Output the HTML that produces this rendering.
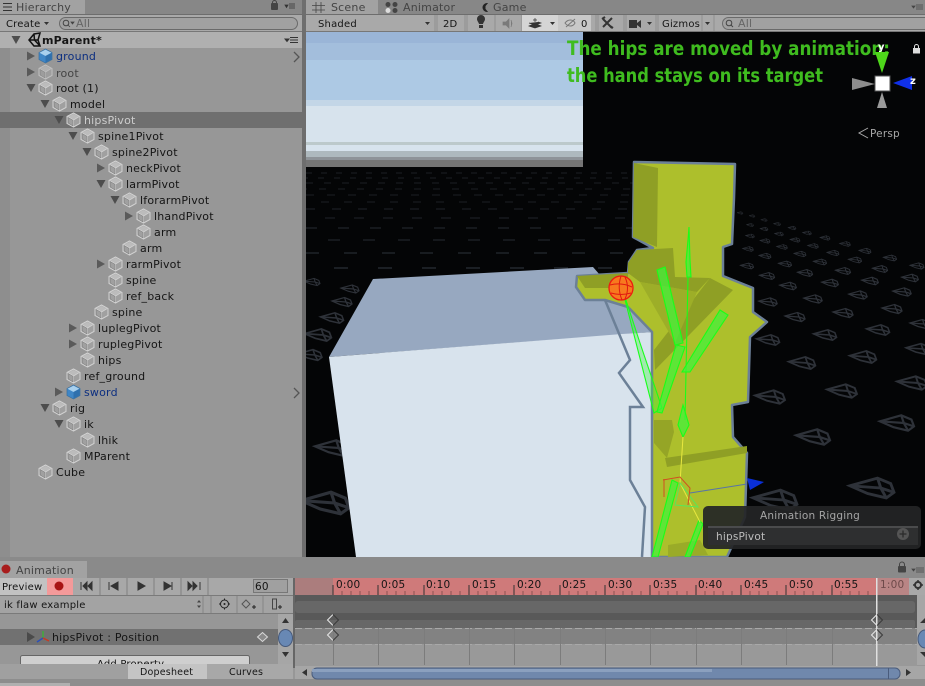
<!DOCTYPE html>
<html><head><meta charset="utf-8"><title>Unity Editor</title>
<style>
html,body{margin:0;padding:0;width:925px;height:686px;overflow:hidden;background:#979797}
svg{display:block;position:absolute;left:0;top:0}
text{font-family:"DejaVu Sans","Liberation Sans",sans-serif;font-size:11px;fill:#151515;letter-spacing:.2px}
.s{font-size:10px}
.big{font-family:"DejaVu Sans","Liberation Sans",sans-serif;font-weight:bold;font-size:19.500px;fill:#3fbc1f;letter-spacing:0}
</style></head><body>
<svg width="925" height="686" viewBox="0 0 925 686" xmlns="http://www.w3.org/2000/svg">
<defs>
<clipPath id="sc"><rect x="306" y="32" width="619" height="526"/></clipPath>
<g id="c"><path d="M0 3.500 6.500 0 13 3.500V10.500L6.500 14 0 10.500Z" fill="#a0a0a0" stroke="#d2d2d2" stroke-width="1"/><path d="M1 3.700 6.500 6.800 12 3.700 6.500 1Z" fill="#bcbcbc"/><path d="M6.500 7V13.500M1 3.700 6.500 7 12 3.700" stroke="#d2d2d2" stroke-width=".8" fill="none"/><path d="M1.200 10 1 4.500 6 7.300V13Z" fill="none" stroke="#777" stroke-width=".5"/></g>
<g id="cb"><path d="M0 3.500 6.500 0 13 3.500V10.500L6.500 14 0 10.500Z" fill="#3f86c6" stroke="#3a6f9e" stroke-width=".7"/><path d="M0.500 3.700 6.500 7 12.500 3.700 6.500 0.600Z" fill="#a8d0ee"/><path d="M6.500 7 12.600 3.700V10.300L6.500 13.600Z" fill="#2f70ad"/></g>
<path id="ad" d="M0 -4.500 8 0 0 4.500Z" transform="rotate(90)" fill="#4d4d4d"/>
<path id="ar" d="M0 -4.500 8 0 0 4.500Z" fill="#5a5a5a"/>
<g id="L" fill="none" stroke="#2e3239" stroke-width="2.600"><path d="M-20 -2 5 -9 17 -4 20 4 13 9-4 5Z"/><path d="M-20 -2 8 0M5 -9 8 0 13 9 M8 0 20 4"/></g>
<g id="D"><path d="M0-5.500-5.500 0 0 5.500" fill="none" stroke="#e8e8e8" stroke-width="1"/><path d="M0-5.500 5.500 0 0 5.500" fill="none" stroke="#3a3a3a" stroke-width="1"/></g>
</defs>

<!-- hierarchy panel -->
<rect width="306" height="558" fill="#979797"/>
<rect x="0" y="0" width="306" height="15" fill="#878787"/>
<rect x="0" y="0" width="85" height="15" fill="#a2a2a2"/>
<path d="M3 3.500h9M3 7h9M3 10.500h9" stroke="#333" stroke-width="1"/>
<text x="16" y="11" style="fill:#444">Hierarchy</text>
<rect x="271" y="3" width="7" height="7" rx="1" fill="#444"/><path d="M272.500 4V2.500a2 2 0 0 1 4 0V4" fill="none" stroke="#444"/>
<path d="M285 5h3l-1.500 2.500Z M289 4h6M289 6h6M289 8h6" stroke="#333" stroke-width=".8" fill="#333"/>
<rect x="0" y="15" width="303" height="17" fill="#a9a9a9"/>
<rect x="0" y="14" width="303" height="1" fill="#6d6d6d"/><rect x="0" y="31" width="303" height="1" fill="#777"/>
<text x="6" y="27" class="s">Create</text><path d="M44 22h5l-2.500 3Z" fill="#333"/>
<rect x="59.500" y="17.500" width="238" height="12" rx="6" fill="#a1a1a1" stroke="#6a6a6a"/>
<circle cx="66" cy="23" r="2.800" fill="none" stroke="#444"/><path d="M68 25l2 2M71 22h3l-1.500 2Z" stroke="#444" fill="#444" stroke-width=".8"/>
<text x="76" y="27" style="fill:#666">All</text>
<rect x="0" y="32" width="303" height="16" fill="#b0b0b0"/>
<rect x="0" y="48" width="10" height="510" fill="#8e8e8e"/>
<rect x="302" y="0" width="4" height="558" fill="#6e6e6e"/>
<use href="#ad" x="16" y="36"/>
<path d="M29 40 34 34 40 33 38 40 40 46 34 46Z M34 34 34.500 40 M29 40H38 M34.500 40 40 46" fill="none" stroke="#111" stroke-width="1.500"/>
<text x="42" y="44" style="font-weight:bold;font-size:11px">mParent*</text>
<path d="M285 39h4l-2 2.500Z M290 37.500h8M290 40h8M290 42.500h8" stroke="#333" stroke-width="1" fill="#333"/>

<rect x="0" y="112" width="302" height="16" fill="#6f6f6f"/>

<!-- tree rows -->
<use href="#ar" x="27" y="56"/><use href="#cb" x="39" y="49"/><text x="56" y="60" style="fill:#0d2f80">ground</text>
<path d="M294 52 299 57 294 62" fill="none" stroke="#555" stroke-width="1.300"/>
<use href="#ar" x="27" y="72"/><use href="#c" x="39" y="65" opacity=".7"/><text x="56" y="77" style="fill:#444">root</text>
<use href="#ad" x="31" y="84"/><use href="#c" x="39" y="81"/><text x="56" y="92">root (1)</text>
<use href="#ad" x="45" y="100"/><use href="#c" x="53" y="97"/><text x="70" y="108">model</text>
<use href="#ad" x="59" y="116"/><use href="#c" x="67" y="113"/><text x="84" y="124" style="fill:#cdcdcd">hipsPivot</text>
<use href="#ad" x="73" y="132"/><use href="#c" x="81" y="129"/><text x="98" y="140">spine1Pivot</text>
<use href="#ad" x="87" y="148"/><use href="#c" x="95" y="145"/><text x="112" y="156">spine2Pivot</text>
<use href="#ar" x="97" y="168"/><use href="#c" x="109" y="161"/><text x="126" y="172">neckPivot</text>
<use href="#ad" x="101" y="180"/><use href="#c" x="109" y="177"/><text x="126" y="188">larmPivot</text>
<use href="#ad" x="115" y="196"/><use href="#c" x="123" y="193"/><text x="140" y="204">lforarmPivot</text>
<use href="#ar" x="125" y="216"/><use href="#c" x="137" y="209"/><text x="154" y="220">lhandPivot</text>
<use href="#c" x="137" y="225"/><text x="154" y="236">arm</text>
<use href="#c" x="123" y="241"/><text x="140" y="252">arm</text>
<use href="#ar" x="97" y="264"/><use href="#c" x="109" y="257"/><text x="126" y="268">rarmPivot</text>
<use href="#c" x="109" y="273"/><text x="126" y="284">spine</text>
<use href="#c" x="109" y="289"/><text x="126" y="300">ref_back</text>
<use href="#c" x="95" y="305"/><text x="112" y="316">spine</text>
<use href="#ar" x="69" y="328"/><use href="#c" x="81" y="321"/><text x="98" y="332">luplegPivot</text>
<use href="#ar" x="69" y="344"/><use href="#c" x="81" y="337"/><text x="98" y="348">ruplegPivot</text>
<use href="#c" x="81" y="353"/><text x="98" y="364">hips</text>
<use href="#c" x="67" y="369"/><text x="84" y="380">ref_ground</text>
<use href="#ar" x="55" y="392"/><use href="#cb" x="67" y="385"/><text x="84" y="396" style="fill:#0d2f80">sword</text>
<path d="M294 388 299 393 294 398" fill="none" stroke="#555" stroke-width="1.300"/>
<use href="#ad" x="45" y="404"/><use href="#c" x="53" y="401"/><text x="70" y="412">rig</text>
<use href="#ad" x="59" y="420"/><use href="#c" x="67" y="417"/><text x="84" y="428">ik</text>
<use href="#c" x="81" y="433"/><text x="98" y="444">lhik</text>
<use href="#c" x="67" y="449"/><text x="84" y="460">MParent</text>
<use href="#c" x="39" y="465"/><text x="56" y="476">Cube</text>

<!-- scene tabs and toolbar -->
<rect x="306" y="0" width="619" height="15" fill="#878787"/>
<rect x="306" y="0" width="72" height="15" fill="#a2a2a2"/>
<path d="M316 2v11M321 2v11M312 5.500h13M312 10h13" stroke="#444" stroke-width=".8"/>
<text x="331" y="11" style="fill:#444">Scene</text>
<circle cx="388" cy="4.500" r="2.500" fill="#444"/><circle cx="395" cy="4.500" r="2.500" fill="#444"/><circle cx="388" cy="10.500" r="2.500" fill="#ddd"/><circle cx="395" cy="10.500" r="2.500" fill="#444"/>
<text x="403" y="11" style="fill:#444">Animator</text>
<path d="M487 3.500a4 4 0 1 0 0 8l-2-2.500v-3Z" fill="#222" stroke="#222"/>
<text x="493" y="11" style="fill:#444">Game</text>
<path d="M912 6h3l-1.500 2Z M916 5h7M916 7h7M916 9h7" stroke="#444" stroke-width=".8" fill="#444"/>
<rect x="306" y="15" width="619" height="17" fill="#a9a9a9"/>
<rect x="306" y="14" width="619" height="1" fill="#6d6d6d"/><rect x="306" y="31" width="619" height="1" fill="#777"/>
<text x="318" y="27" class="s">Shaded</text><path d="M425 22h5l-2.500 3Z" fill="#333"/>
<path d="M435 15v16M437 15v16M465 15v16M467 15v16M495 15v16M522 15v16M596 15v16M598 15v16M624 15v16M626 15v16M656 15v16M658 15v16M702 15v16M714 15v16" stroke="#8f8f8f"/>
<text x="443" y="27" class="s">2D</text>
<path d="M477 18a4 4 0 0 1 8 0c0 2-1.500 3-2 5h-4c-.5-2-2-3-2-5ZM479 24h4v3h-4Z" fill="#333" transform="translate(0 1)"/>
<path d="M503 22h3l3-3v9l-3-3h-3Z M511 20l1 3.500-1 3.500" fill="#7a7a7a" stroke="#7a7a7a" stroke-width=".7"/>
<rect x="522" y="15" width="36" height="16" fill="#d5d5d5"/>
<rect x="558" y="15" width="33" height="16" fill="#c8c8c8"/>
<path d="M529 26l6 2 6-2-6-2.500ZM529 23l6 2 6-2-3-1M535 18v4M533 20h4" fill="#333" stroke="#333" stroke-width=".7"/>
<path d="M550 22h5l-2.500 3Z" fill="#333"/>
<path d="M565 23c3-4 8-4 10 0-2 4-7 4-10 0Z M575 19l-9 8" fill="none" stroke="#777" stroke-width="1"/><text x="581" y="27" class="s">0</text>
<path d="M603 19l9 9M612 18l-9 9M602 19l3-2M610 26l3 2" stroke="#333" stroke-width="2"/>
<rect x="629" y="20" width="8" height="8" fill="#333"/><path d="M637 23l4-3v8l-4-3Z" fill="#333"/>
<path d="M647 22h5l-2.500 3Z" fill="#333"/>
<text x="662" y="27" class="s">Gizmos</text><path d="M705 22h5l-2.500 3Z" fill="#333"/>
<rect x="722.500" y="17.500" width="210" height="12" rx="6" fill="#a1a1a1" stroke="#6a6a6a"/>
<circle cx="729" cy="23" r="2.800" fill="none" stroke="#444"/><path d="M731 25l2 2" stroke="#444"/>
<text x="738" y="27" style="fill:#666">All</text>

<!-- scene -->
<rect x="306" y="32" width="619" height="526" fill="#040506"/>
<rect x="306" y="32" width="277" height="28" fill="#9ab5d7"/>
<rect x="306" y="43" width="277" height="17" fill="#a3bedc"/>
<rect x="306" y="60" width="277" height="40" fill="#adc9e4"/>
<rect x="306" y="100" width="277" height="6" fill="#c3d6e7"/>
<rect x="306" y="106" width="277" height="36" fill="#d7e3ed"/>
<rect x="306" y="142" width="277" height="3" fill="#bcc9cb"/>
<rect x="306" y="145" width="277" height="6" fill="#d7e3ed"/>
<rect x="306" y="151" width="277" height="6" fill="#aeb9be"/>
<rect x="306" y="157" width="277" height="3" fill="#8e9398"/>
<rect x="306" y="160" width="277" height="7" fill="#757575"/>

<!-- floor marks (left) -->
<g stroke="#1b1f24" fill="none">
<path d="M306 173H650" stroke-dasharray="6 9"/>
<path d="M306 178H650" stroke-dasharray="6 10" stroke-dashoffset="4"/>
<path d="M306 183H650" stroke-dasharray="7 11"/>
<path d="M306 189H650" stroke-dasharray="7 12" stroke-dashoffset="6"/>
<path d="M306 195H650" stroke-dasharray="8 13"/>
<path d="M306 202H650" stroke-dasharray="8 15" stroke-dashoffset="8"/>
<path d="M306 209H650" stroke-dasharray="9 17" stroke-width="1.200"/>
<path d="M306 218H650" stroke-dasharray="10 19" stroke-dashoffset="10" stroke-width="1.300"/>
<path d="M306 228H650" stroke-dasharray="11 21" stroke-width="1.400"/>
<path d="M306 240H650" stroke-dasharray="12 23" stroke-dashoffset="13" stroke-width="1.600"/>
<path d="M306 253H650" stroke-dasharray="13 25" stroke-width="1.800"/>
<path d="M306 268H650" stroke-dasharray="14 30" stroke-dashoffset="16" stroke-width="2"/>
</g>
<g clip-path="url(#sc)">
<use href="#L" transform="translate(312 282) scale(.4)"/>
<use href="#L" transform="translate(350 289) scale(.45)"/>
<use href="#L" transform="translate(342 302) scale(.5)"/>
<use href="#L" transform="translate(332 318) scale(.58)"/>
<use href="#L" transform="translate(318 335) scale(.67)"/>
<use href="#L" transform="translate(310 355) scale(.6)"/>
<use href="#L" transform="translate(332 448) scale(.85)"/>
<use href="#L" transform="translate(325 503) scale(1.200)"/>
<!-- floor marks (right) -->
<use href="#L" transform="translate(770 397) scale(.75)"/><use href="#L" transform="translate(842 391) scale(.75)"/><use href="#L" transform="translate(912 383) scale(.75)"/>
<use href="#L" transform="translate(802 363) scale(.67)"/><use href="#L" transform="translate(863 357) scale(.67)"/><use href="#L" transform="translate(918 349) scale(.6)"/>
<use href="#L" transform="translate(768 340) scale(.58)"/><use href="#L" transform="translate(825 335) scale(.58)"/><use href="#L" transform="translate(878 330) scale(.58)"/><use href="#L" transform="translate(920 324) scale(.5)"/>
<use href="#L" transform="translate(795 317) scale(.5)"/><use href="#L" transform="translate(843 313) scale(.5)"/><use href="#L" transform="translate(892 309) scale(.5)"/>
<use href="#L" transform="translate(768 302) scale(.46)"/><use href="#L" transform="translate(813 299) scale(.46)"/><use href="#L" transform="translate(858 295) scale(.46)"/><use href="#L" transform="translate(902 292) scale(.46)"/>
<use href="#L" transform="translate(788 286) scale(.42)"/><use href="#L" transform="translate(830 283) scale(.42)"/><use href="#L" transform="translate(870 281) scale(.42)"/><use href="#L" transform="translate(910 278) scale(.42)"/>
<use href="#L" transform="translate(767 276) scale(.38)"/><use href="#L" transform="translate(805 273) scale(.38)"/><use href="#L" transform="translate(843 271) scale(.38)"/><use href="#L" transform="translate(880 269) scale(.38)"/><use href="#L" transform="translate(917 266) scale(.35)"/>
<use href="#L" transform="translate(747 266) scale(.33)"/><use href="#L" transform="translate(785 264) scale(.33)"/><use href="#L" transform="translate(820 262) scale(.33)"/><use href="#L" transform="translate(855 260) scale(.33)"/><use href="#L" transform="translate(890 258) scale(.33)"/>
<use href="#L" transform="translate(765 256) scale(.3)"/><use href="#L" transform="translate(800 254) scale(.3)"/><use href="#L" transform="translate(833 253) scale(.3)"/><use href="#L" transform="translate(865 251) scale(.3)"/>
<use href="#L" transform="translate(748 249) scale(.27)"/><use href="#L" transform="translate(782 247) scale(.27)"/><use href="#L" transform="translate(813 246) scale(.27)"/><use href="#L" transform="translate(845 244) scale(.27)"/>
<use href="#L" transform="translate(765 241) scale(.25)"/><use href="#L" transform="translate(795 240) scale(.25)"/><use href="#L" transform="translate(825 238) scale(.25)"/>
<use href="#L" transform="translate(750 236) scale(.22)"/><use href="#L" transform="translate(779 234) scale(.22)"/><use href="#L" transform="translate(807 233) scale(.22)"/>
<use href="#L" transform="translate(764 229) scale(.2)"/><use href="#L" transform="translate(792 228) scale(.2)"/>
<use href="#L" transform="translate(750 225) scale(.18)"/><use href="#L" transform="translate(777 224) scale(.18)"/>
<use href="#L" transform="translate(764 220) scale(.16)"/><use href="#L" transform="translate(752 216) scale(.15)"/><use href="#L" transform="translate(740 213) scale(.15)"/>
<use href="#L" transform="translate(813 437) scale(.85)"/><use href="#L" transform="translate(897 423) scale(.85)"/>
<use href="#L" transform="translate(872 488) scale(1.100)"/><use href="#L" transform="translate(775 500) scale(1.100)"/>
</g>

<!-- white cube -->
<path d="M329 357 373 279 593 267 600 275 654 332Z" fill="#97a8c0"/>
<path d="M329 357 622 334 654 332V557H356Z" fill="#d8e3ed"/>

<!-- character -->
<path d="M605 300 630 360 619 373 643 407 630 407V480L645 507 642 557" fill="none" stroke="#6c8097" stroke-width="2.500"/>
<path d="M634 162 735 164 734 198 732 244 723 247V276L753 288V312L767 322 750 337 748 402 732 405 733 437 747 453 745 517 727 557H652V332L628 307 605 300H585L576 287 577 276 628 273 629 262 637 250 653 248 633 237Z" fill="#adbf2c" stroke="#6c8097" stroke-width="2.500" stroke-linejoin="round"/>
<path d="M634 163 658 168 657 247 633 237Z" fill="#8f9f25"/>
<path d="M577 276 628 273 628 288 585 288Z" fill="#8f9f25"/>
<path d="M637 250 673 248 675 277 710 278 697 292 640 282 628 273 628 263Z" fill="#8f9f25"/>
<path d="M710 278 733 290 655 370 654 350Z" fill="#8f9f25"/>
<path d="M640 282 697 292 675 343Z" fill="#9dae28"/>
<path d="M665 458 747 446 747 453 667 467Z" fill="#8f9f25"/>
<path d="M654 420 672 420 674 432 667 458 654 443Z" fill="#95a526"/>
<path d="M668 545 700 540 708 555 668 557Z" fill="#9aab28"/>

<!-- bones -->
<g fill="#3cf53c" fill-opacity=".7" stroke="#18ff18" stroke-width="1.100">
<path d="M622 288 640 343 662 408 654 413Z" fill-opacity=".35"/>
<path d="M657 270 665 267 683 343 675 345Z"/>
<path d="M689 227 690 260 691 277 687 277 686 262 688 240ZM688 277 685 420"/>
<path d="M720 310 728 315 690 372 682 372Z"/>
<path d="M676 345 685 347 662 413 657 412Z"/>
<path d="M683 405 678 425 683 437 689 425Z"/>
<path d="M672 480 678 483 658 557 652 557Z"/>
<path d="M699 520 703 524 690 557 685 557Z"/>
</g>
<path d="M683 437 680 483 700 522" stroke="#e8e840" fill="none"/>
<path d="M680 483 675 505 698 507Z" fill="none" stroke="#58e858"/>
<path d="M663 480 680 477 690 488 688 505" fill="none" stroke="#d05020"/>
<path d="M664 479V497" stroke="#d05020"/>
<path d="M690 493 747 484" stroke="#5873a8"/>
<path d="M747 478 764 482 750 490Z" fill="#0a2fd8"/>
<!-- target -->
<circle cx="621" cy="288" r="12" fill="#f77a1e" stroke="#ee1a10" stroke-width="1.300"/>
<path d="M610 285Q621 282 632 287M611 293Q621 296 631 293M621 276Q617 288 622 300M625 277Q630 288 625 299" fill="none" stroke="#e01a10"/>

<!-- overlay text -->
<text x="567" y="55" class="big" textLength="323" lengthAdjust="spacingAndGlyphs">The hips are moved by animation:</text>
<text x="567" y="82" class="big" textLength="256" lengthAdjust="spacingAndGlyphs">the hand stays on its target</text>

<!-- gizmo -->
<path d="M875 52 889 52 882 73Z" fill="#4ed81a"/>
<path d="M912 76 912 90 893 83Z" fill="#1030e8"/>
<path d="M852 78 852 90 875 84Z" fill="#8d8d8d"/>
<path d="M877 108 887 108 882 92Z" fill="#9a9a9a"/>
<rect x="875" y="76" width="15" height="15" fill="#fff" stroke="#555"/>
<text x="878" y="50" style="fill:#fff;font-weight:bold;font-size:10px">y</text>
<text x="910" y="84" style="fill:#fff;font-weight:bold;font-size:10px">z</text>
<rect x="913" y="48" width="7" height="5.500" fill="#ddd"/><path d="M914.500 48V46.500a2 2 0 0 1 4 0V48" fill="none" stroke="#ddd"/>
<path d="M868 128 859 133 868 138" fill="none" stroke="#aaa"/>
<text x="870" y="137" style="fill:#a8a8a8;font-size:10.500px">Persp</text>

<!-- Rigging overlay -->
<rect x="703" y="506" width="218" height="43" rx="5" fill="#242526" opacity=".93"/>
<rect x="708" y="526" width="210" height="19" fill="#2e2f30"/>
<rect x="708" y="526" width="210" height="2" fill="#4a4b4c"/>
<text x="760" y="519" style="fill:#a5a5a5;font-size:10.500px">Animation Rigging</text>
<text x="716" y="540" style="fill:#bdbdbd;font-size:10.500px">hipsPivot</text>
<circle cx="903" cy="534" r="6" fill="#555"/><path d="M899.500 534h7M903 530.500v7" stroke="#2b2b2b" stroke-width="1.300"/>

<!-- animation panel -->
<rect x="0" y="557" width="925" height="129" fill="#979797"/>
<rect x="0" y="557" width="925" height="21" fill="#8a8a8a"/>
<rect x="0" y="561" width="87" height="17" fill="#a2a2a2"/>
<circle cx="6" cy="569" r="4.500" fill="#a81d1d"/>
<text x="16" y="574" style="fill:#444">Animation</text>
<rect x="898" y="566" width="8" height="6.500" rx="1" fill="#444"/><path d="M899.500 566V564.500a2.500 2.500 0 0 1 5 0V566" fill="none" stroke="#444"/>
<path d="M912 569h3l-1.500 2ZM916 568h8M916 570h8M916 572h8" stroke="#444" stroke-width=".8" fill="#444"/>

<!-- controls row -->
<rect x="0" y="578" width="294" height="17" fill="#a8a8a8"/>
<rect x="0" y="578" width="47" height="17" fill="#c2c2c2"/>
<text x="2" y="590" class="s">Preview</text>
<rect x="47" y="578" width="26" height="17" fill="#f49a9a"/>
<circle cx="59" cy="586" r="4.500" fill="#a81414"/>
<path d="M100 578v17M127 578v17M154 578v17M181 578v17M208 578v17" stroke="#808080"/>
<path d="M81 582v8M87 582l-4 4 4 4ZM92 582l-4 4 4 4Z" fill="#333" stroke="#333"/>
<path d="M109 582v8M118 582l-7 4 7 4Z" fill="#333" stroke="#333"/>
<path d="M138 582l7 4-7 4Z" fill="#333" stroke="#333"/>
<path d="M172 582v8M164 582l7 4-7 4Z" fill="#333" stroke="#333"/>
<path d="M200 582v8M188 582l4 4-4 4ZM193 582l4 4-4 4Z" fill="#333" stroke="#333"/>
<rect x="253.500" y="579.500" width="34" height="13" fill="#a0a0a0" stroke="#777"/>
<text x="255" y="590" style="font-size:10.500px">60</text>

<rect x="0" y="595" width="294" height="20" fill="#a3a3a3"/>
<rect x="0" y="595" width="294" height="1" fill="#7a7a7a"/><rect x="0" y="613" width="294" height="1" fill="#7a7a7a"/>
<text x="4" y="608" class="s">ik flaw example</text>
<path d="M197 602.500h4l-2-2.500ZM197 605.500h4l-2 2.500Z" fill="#444"/>
<path d="M203 596v17M211 596v17M237 596v17M263 596v17" stroke="#848484"/>
<circle cx="224.500" cy="604" r="4" fill="none" stroke="#222"/><circle cx="224.500" cy="604" r="1" fill="#222"/><path d="M219 604h2M228 604h2M224.500 598.500v2M224.500 607.500v2" stroke="#222"/>
<path d="M246 600l4 4-4 4-4-4Z" fill="none" stroke="#555"/><path d="M252 607h4M254 605v4" stroke="#222"/>
<rect x="272.500" y="599" width="4" height="10" fill="none" stroke="#444"/><path d="M278 607h4M280 605v4" stroke="#222"/>

<rect x="0" y="614" width="278" height="15" fill="#979797"/>
<rect x="0" y="629" width="278" height="16" fill="#717171"/>
<path d="M27 632 35 637 27 642Z" fill="#4a4a4a"/>
<path d="M43 631V638" stroke="#3fae3a" stroke-width="1.500"/>
<path d="M43 638 37 642" stroke="#2c4fb8" stroke-width="1.500"/><path d="M43 638 49 641" stroke="#c83a22" stroke-width="1.500"/>
<text x="52" y="641">hipsPivot : Position</text>
<path d="M262.500 632.500l5 4.500-5 4.500-5-4.500Z" fill="#8a8a8a" stroke="#d8d8d8"/>

<rect x="278" y="614" width="15" height="51" fill="#a6a6a6"/>
<path d="M282 623h7l-3.500-5Z M282 652h7l-3.500 5Z" fill="#333"/>
<ellipse cx="285.500" cy="638" rx="7" ry="8.500" fill="#6888b4" stroke="#46597a"/>

<rect x="20.500" y="655.500" width="229" height="12" rx="2" fill="#cfcfcf" stroke="#666"/>
<text x="97" y="667" class="s">Add Property</text>

<rect x="0" y="664" width="128" height="15" fill="#a0a0a0"/>
<rect x="128" y="664" width="79" height="15" fill="#c4c4c4"/>
<rect x="207" y="664" width="80" height="15" fill="#a8a8a8"/>
<rect x="287" y="664" width="6" height="15" fill="#a8a8a8"/>
<text x="140" y="675" style="font-size:9.500px">Dopesheet</text>
<text x="229" y="675" style="font-size:9.500px">Curves</text>
<rect x="0" y="679" width="925" height="7" fill="#8d8d8d"/>
<rect x="0" y="683" width="70" height="3" fill="#b0b0b0"/>

<!-- timeline ruler -->
<rect x="294" y="578" width="39" height="17" fill="#ab7d7d"/>
<rect x="333" y="578" width="544" height="17" fill="#cf7a7a"/>
<rect x="877" y="578" width="32" height="17" fill="#b98585"/>
<rect x="909" y="578" width="16" height="17" fill="#a8a8a8"/>
<rect x="293" y="578" width="2" height="90" fill="#666"/>
<path d="M333 585v10M378 585v10M424 585v10M469 585v10M514 585v10M560 585v10M605 585v10M650 585v10M696 585v10M741 585v10M786 585v10M832 585v10" stroke="#333" stroke-width="1"/>
<path d="M342 591v4M351 591v4M360 591v4M369 591v4M387 591v4M396 591v4M405 591v4M414 591v4M433 591v4M442 591v4M451 591v4M460 591v4M478 591v4M487 591v4M496 591v4M505 591v4M523 591v4M532 591v4M541 591v4M550 591v4M569 591v4M578 591v4M587 591v4M596 591v4M614 591v4M623 591v4M632 591v4M641 591v4M659 591v4M668 591v4M677 591v4M687 591v4M705 591v4M714 591v4M723 591v4M732 591v4M750 591v4M759 591v4M768 591v4M777 591v4M795 591v4M804 591v4M813 591v4M822 591v4M841 591v4M850 591v4M859 591v4M868 591v4" stroke="#7a4a4a" stroke-width=".8"/>
<g style="font-size:10.500px;fill:#222">
<text x="336" y="588" style="font-size:10.500px">0:00</text><text x="381" y="588" style="font-size:10.500px">0:05</text><text x="426" y="588" style="font-size:10.500px">0:10</text><text x="472" y="588" style="font-size:10.500px">0:15</text><text x="517" y="588" style="font-size:10.500px">0:20</text><text x="562" y="588" style="font-size:10.500px">0:25</text><text x="608" y="588" style="font-size:10.500px">0:30</text><text x="653" y="588" style="font-size:10.500px">0:35</text><text x="698" y="588" style="font-size:10.500px">0:40</text><text x="744" y="588" style="font-size:10.500px">0:45</text><text x="789" y="588" style="font-size:10.500px">0:50</text><text x="834" y="588" style="font-size:10.500px">0:55</text>
<text x="880" y="588" style="font-size:10.500px;fill:#6e4a4a">1:00</text></g>
<circle cx="918" cy="585" r="3" fill="none" stroke="#333" stroke-width="2"/><path d="M918 580v2M918 588v2M913 585h2M921 585h2" stroke="#333" stroke-width="1.500"/>

<!-- tracks -->
<rect x="295" y="595" width="622" height="33" fill="#595959"/>
<rect x="295" y="601" width="620" height="12" rx="3" fill="#676767"/>
<rect x="295" y="620" width="620" height="8" rx="2" fill="#676767"/>
<rect x="295" y="628" width="622" height="16" fill="#828282"/>
<rect x="295" y="644" width="622" height="22" fill="#999"/>
<path d="M295 628.500H917M295 644.500H917" stroke="#a8a8a8" stroke-dasharray="7 3"/>
<path d="M333.500 628v37M378.500 628v37M424.500 628v37M469.500 628v37M514.500 628v37M560.500 628v37M605.500 628v37M650.500 628v37M696.500 628v37M741.500 628v37M786.500 628v37M832.500 628v37" stroke="#7c7c7c"/>
<rect x="876" y="578" width="1.500" height="88" fill="#e0e0e0"/>
<use href="#D" x="333" y="620"/><use href="#D" x="333" y="635"/><use href="#D" x="877" y="620"/><use href="#D" x="877" y="635"/>
<rect x="917" y="595" width="8" height="70" fill="#a6a6a6"/>
<path d="M920 623h5v-5ZM920 652h5v5Z" fill="#333"/>
<ellipse cx="925" cy="639" rx="7" ry="9" fill="#6888b4" stroke="#46597a"/>

<!-- bottom scrollbar -->
<rect x="295" y="666" width="630" height="13" fill="#a6a6a6"/>
<path d="M307 669v7l-5-3.500Z M906 669v7l5-3.500Z" fill="#333"/>
<rect x="312" y="668" width="588" height="11" rx="5" fill="#7088ac" stroke="#4a5c7c"/>
<rect x="312" y="669" width="400" height="3" fill="#8ba0be"/>
<path d="M888.500 668v11" stroke="#4a5c7c"/>
</svg>
</body></html>
